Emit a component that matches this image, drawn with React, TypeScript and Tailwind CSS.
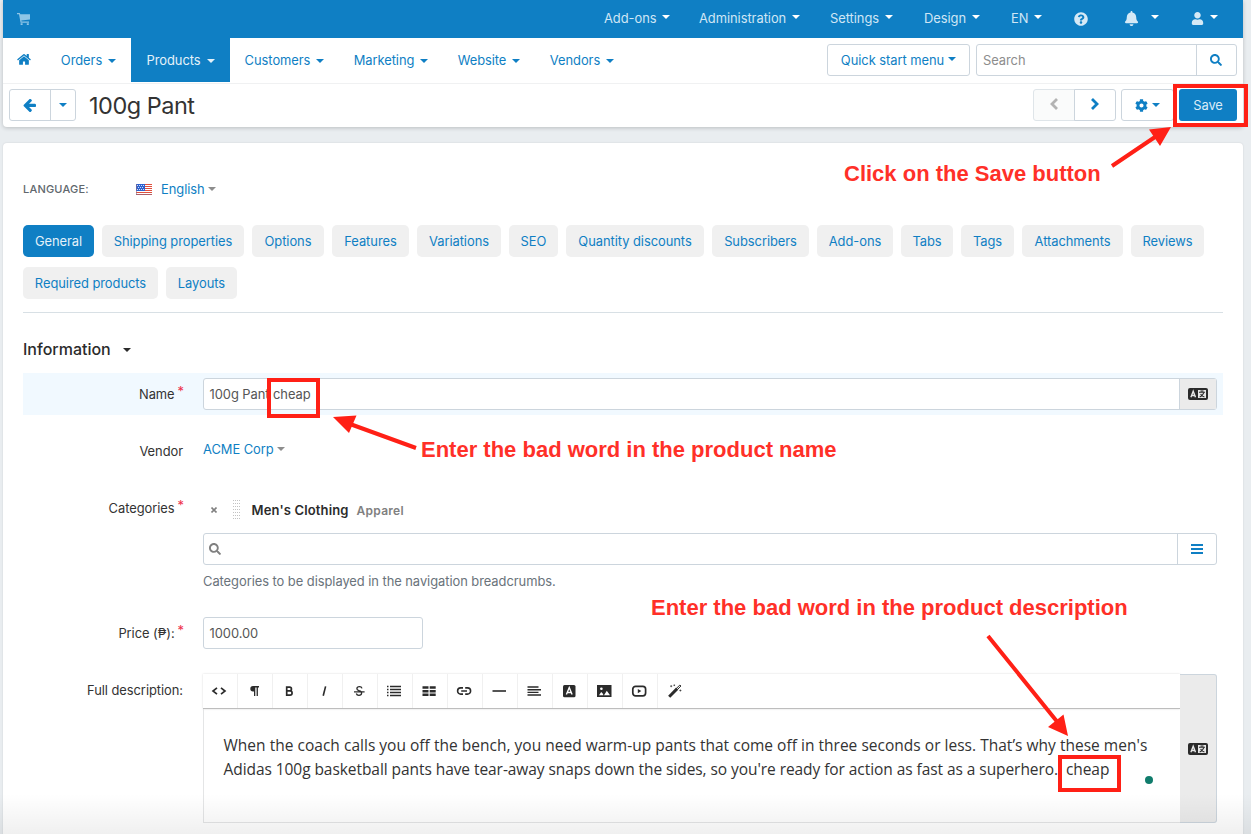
import type { ReactNode } from "react";
import { FaBell, FaCog, FaQuestionCircle, FaSearch, FaUser } from "react-icons/fa";

const Caret = ({ className = "" }: { className?: string }) => (
    <svg className={`shrink-0 ${className}`} width="8" height="4" viewBox="0 0 8 4" fill="currentColor">
        <path d="M0 0h8L4 4z" />
    </svg>
);

const topMenu = [
    { label: "Add-ons", width: "w-[95px]" },
    { label: "Administration", width: "w-[131px]" },
    { label: "Settings", width: "w-[94px]" },
    { label: "Design", width: "w-[87px]" },
    { label: "EN", width: "w-[63px]" },
];

const mainMenu = [
    { label: "Orders", width: "w-[85px]" },
    { label: "Products", width: "w-[99px]", active: true },
    { label: "Customers", width: "w-[109px]" },
    { label: "Marketing", width: "w-[104px]" },
    { label: "Website", width: "w-[92px]" },
    { label: "Vendors", width: "w-[94px]" },
];

const tabs = [
    { label: "General", width: "w-[71px]", active: true },
    { label: "Shipping properties", width: "w-[142px]" },
    { label: "Options", width: "w-[72px]" },
    { label: "Features", width: "w-[77px]" },
    { label: "Variations", width: "w-[84px]" },
    { label: "SEO", width: "w-[49px]" },
    { label: "Quantity discounts", width: "w-[138px]" },
    { label: "Subscribers", width: "w-[97px]" },
    { label: "Add-ons", width: "w-[76px]" },
    { label: "Tabs", width: "w-[52px]" },
    { label: "Tags", width: "w-[53px]" },
    { label: "Attachments", width: "w-[101px]" },
    { label: "Reviews", width: "w-[73px]" },
    { label: "Required products", width: "w-[135px]" },
    { label: "Layouts", width: "w-[71px]" },
];

const CartIcon = () => (
    <svg width="14" height="13" viewBox="0 0 14 13" fill="currentColor">
        <path d="M0 0h2.8l.5 1.2H13v5.2L4.3 7.6l.2.9H12v1.2H3.6L2 1.2H0z" />
        <path d="M3.6 10.2h2V12h-2zM9.8 10.2h2V12h-2z" />
    </svg>
);

const HomeIcon = () => (
    <svg width="14" height="14" viewBox="64 128 1664 1664" fill="currentColor">
        <path d="M1472 992v480q0 26-19 45t-45 19h-384v-384h-256v384h-384q-26 0-45-19t-19-45v-480q0-1 .5-3t.5-3l575-474 575 474q1 2 1 6zm223-69l-62 74q-8 9-21 11h-3q-13 0-21-7l-692-577-692 577q-12 8-24 7-13-2-21-11l-62-74q-8-10-7-23.5t11-21.5l719-599q32-26 76-26t76 26l244 204v-195q0-14 9-23t23-9h192q14 0 23 9t9 23v408l219 182q10 8 11 21.5t-7 23.5z" />
    </svg>
);

const BackIcon = () => (
    <svg width="13" height="13" viewBox="0 -60 1536 1536" fill="currentColor">
        <path d="M1536 640v128q0 53-32.5 90.5t-84.5 37.5h-704l293 294q38 36 38 90t-38 90l-75 76q-37 37-90 37-52 0-91-37l-651-652q-37-37-37-90 0-52 37-91l651-650q38-38 91-38 52 0 90 38l75 74q38 38 38 91t-38 91l-293 293h704q52 0 84.5 37.5t32.5 90.5z" />
    </svg>
);

const Chevron = ({ d }: { d: string }) => (
    <svg width="10" height="14" viewBox="0 0 10 14" className="-mt-0.5 mr-px">
        <path d={d} stroke="currentColor" strokeWidth="2.8" fill="none" />
    </svg>
);

const FlagIcon = () => (
    <svg width="16" height="11" viewBox="0 0 16 11">
        <rect width="16" height="11" fill="#fff" />
        <path d="M0 .5h16M0 2.5h16M0 4.5h16M0 6.5h16M0 8.5h16M0 10.5h16" stroke="#e0503f" />
        <rect width="9" height="7" fill="#2c62d0" />
        <path d="M1 1.5h7M2 3.5h6M1 5.5h7" stroke="#cfdcf7" strokeDasharray="1 1" />
        <path d="M.5 0v11M0 10.5h16" stroke="#8b6a86" strokeOpacity=".6" />
    </svg>
);

const TranslateIcon = () => (
    <svg width="20" height="12" viewBox="0 0 20 12">
        <rect width="20" height="12" rx="2" fill="#2b2b2b" />
        <path d="M2.9 9.2 5.2 3.2l2.3 6M3.7 7.5h3" stroke="#e8e8e8" strokeWidth="1.4" fill="none" />
        <rect x="10" y="2" width="8" height="8" fill="#e8e8e8" />
        <path d="M11 4.2h6M12.5 3h3M15.7 4.8c-.5 1.8-2 3.2-4 4.2M12.6 6c.8 1.4 2 2.4 3.8 3" stroke="#2b2b2b" strokeWidth="1.1" fill="none" />
    </svg>
);

const toolIcons: ReactNode[] = [
    <path d="M6 4.8 2 8l4 3.2M10 4.8 14 8l-4 3.2" stroke="currentColor" strokeWidth="1.7" fill="none" />,
    <path d="M13 3v1.4h-1.1V13h-1.3V4.4H9.3V13H8V8.4H7A2.7 2.7 0 0 1 7 3z" fill="currentColor" />,
    <path d="M5.7 4.2h2.9a1.8 1.8 0 0 1 0 3.7H5.7zM5.7 7.9H9a2 2 0 0 1 0 4.2H5.7z" stroke="currentColor" strokeWidth="1.7" fill="none" />,
    <path d="M9.6 3.4 7.2 12.8" stroke="currentColor" strokeWidth="1.6" fill="none" />,
    <path d="M11 5.4C10.7 4.4 9.7 3.7 8.5 3.7c-1.5 0-2.6.8-2.6 2 0 1.1.8 1.6 2.1 2 1.8.5 2.8 1.2 2.6 2.6-.1 1.3-1.3 2-2.7 2-1.4 0-2.3-.7-2.6-1.8M3 8.8h10.600" stroke="currentColor" strokeWidth="1.3" fill="none" />,
    <path d="M1 3.5h1.5M4 3.5h11M1 6.5h1.5M4 6.5h11M1 9.5h1.5M4 9.5h11M1 12.5h1.5M4 12.5h11" stroke="currentColor" strokeWidth="1.5" fill="none" />,
    <path d="M1.5 3.3h6v2.5h-6zM8.7 3.3h6v2.5h-6zM1.5 6.9h6v2.6h-6zM8.7 6.9h6v2.6h-6zM1.5 10.6h6V13h-6zM8.7 10.6h6V13h-6z" fill="currentColor" />,
    <path d="M7 4.9H4.7a3.1 3.1 0 0 0 0 6.2H7M9.2 4.9h2.3a3.1 3.1 0 0 1 0 6.2H9.2M5.200 8H11" stroke="currentColor" strokeWidth="1.6" fill="none" />,
    <path d="M1.5 8H15" stroke="currentColor" strokeWidth="1.6" />,
    <path d="M1.5 4h11M1.5 6.7H15M1.5 9.4h11M1.5 12H15" stroke="currentColor" strokeWidth="1.4" />,
    <>
        <rect x="2" y="2" width="12.5" height="12.2" rx="1.5" fill="currentColor" />
        <path d="M5.4 11.6 8.25 4.6l2.85 7M6.4 9.5h3.7" stroke="#fff" strokeWidth="1.4" fill="none" />
    </>,
    <>
        <rect x="1" y="2" width="14.5" height="12" fill="currentColor" />
        <path d="M3 12.2 5.2 9l1.5 1.5.8 1.7zM8 12.2l2.8-4.400 3.2 4.400z" fill="#fff" />
        <circle cx="5.4" cy="5.8" r="1.3" fill="#fff" />
    </>,
    <>
        <rect x="1.8" y="3.3" width="12.8" height="9.6" rx="2.8" stroke="currentColor" strokeWidth="1.7" fill="none" />
        <path d="M6.800 5.9v4.3L10.300 8z" fill="currentColor" />
    </>,
    <>
        <path d="M2.2 13.7 10.2 5.6" stroke="currentColor" strokeWidth="3" />
        <path d="M9.6 5.2 12.9 2l1 1-3.2 3.3" stroke="currentColor" strokeWidth="1" fill="none" />
        <path d="M4.2 2.2v2M3.2 3.2h2M7.3 1.5v1.6M6.5 2.3h1.6M13.4 6.5v2M12.4 7.500h2" stroke="currentColor" strokeWidth=".7" />
    </>,
];

const Label = ({ children, required, className = "" }: { children: ReactNode; required?: boolean; className?: string }) => (
    <div className={`flex w-40 shrink-0 justify-end leading-4 text-[#333] ${className}`}>
        {children}
        {required && <span className="ml-[3px] -mt-[3px] -mr-px text-[#ee2e4a]">*</span>}
    </div>
);

const Header = () => (
    <header className="mr-2 ml-[3px] h-[127px] rounded-b bg-white shadow-[0_1px_4px_rgba(0,0,0,0.2)]">
        <div className="flex h-[38px] items-center justify-between bg-[#0f7fc4] pl-[14px] text-[#cfe6f5]">
            <span className="text-[#8fc5e6]"><CartIcon /></span>
            <div className="flex w-[639px] items-center pb-[3px]">
                {topMenu.map((item) => (
                    <div key={item.label} className={`flex shrink-0 items-center gap-1.5 ${item.width}`}>
                        {item.label}
                        <Caret className="-mt-px text-white" />
                    </div>
                ))}
                <FaQuestionCircle className="mt-0.5 mr-9 size-[14px] text-[#d5e9f6]" />
                <FaBell className="mt-px mr-3 size-[15px] text-[#d5e9f6]" />
                <Caret className="mr-8 -mt-px text-white" />
                <FaUser className="mt-px mr-1.5 size-[13px] text-[#d5e9f6]" />
                <Caret className="-mt-px text-white" />
            </div>
        </div>
        <div className="flex h-[46px] border-b border-[#f0f1f2] text-[#0f7fc4]">
            <div className="flex h-11 w-[43px] items-center pl-[14px]"><HomeIcon /></div>
            {mainMenu.map((item) => (
                <div
                    key={item.label}
                    className={`flex h-11 shrink-0 items-center justify-center gap-1.5 ${item.width} ${item.active ? "bg-[#0f7fc4] text-[#e4f1f9]" : ""}`}
                >
                    {item.label}
                    <Caret className="mt-0.5" />
                </div>
            ))}
            <div className="mt-1.5 mr-1.5 ml-auto flex gap-1.5">
                <button className="flex h-8 w-[143px] items-center justify-center gap-1 rounded-[3px] border border-[#ccd5dd]">
                    Quick start menu <Caret className="-mt-0.5" />
                </button>
                <div className="flex h-8 w-[261px] rounded-[3px] border border-[#ccd5dd]">
                    <span className="flex-1 pt-[7px] pl-[6px] leading-4 text-[#8d8d8d]">Search</span>
                    <span className="flex w-10 items-center justify-center border-l border-[#ccd5dd]">
                        <FaSearch className="mr-px size-3" />
                    </span>
                </div>
            </div>
        </div>
        <div className="flex items-center pt-[5px] pr-1.5 pl-1.5 text-[#0f7fc4]">
            <div className="flex h-8 w-[67px] rounded-[3px] border border-[#ccd5dd]">
                <span className="flex w-[41px] items-center justify-center border-r border-[#ccd5dd] pr-px"><BackIcon /></span>
                <span className="flex flex-1 items-center justify-center"><Caret /></span>
            </div>
            <h1 className="ml-[13px] pt-px text-[23.5px] leading-[31px] tracking-[-0.5px] text-[#333]">100g Pant</h1>
            <div className="ml-auto flex">
                <span className="flex h-8 w-[42px] items-center justify-center rounded-l-[3px] border border-[#dfe5e9] bg-[#fafbfb] text-[#b3b3b3]">
                    <Chevron d="M8 2 3 7l5 5" />
                </span>
                <span className="-ml-px flex h-8 w-[42px] items-center justify-center rounded-r-[3px] border border-[#ccd5dd]">
                    <Chevron d="M2 2l5 5-5 5" />
                </span>
                <span className="ml-[5px] flex h-8 w-[53px] items-center justify-center gap-1 rounded-[3px] border border-[#ccd5dd]">
                    <FaCog className="size-[13px]" /> <Caret />
                </span>
                <button className="ml-[5px] h-8 w-[58px] rounded-[3px] bg-[#0f7fc4] text-[#d9ebf7]">Save</button>
            </div>
        </div>
    </header>
);

const Editor = () => (
    <div className="flex h-[149px] w-[1014px]">
        <div className="w-[977px]">
            <div className="flex h-[35px] border-b border-[#bdbdbd] text-[#2b2b2b] shadow-[0_0_2px_rgba(0,0,0,0.15)]">
                {toolIcons.map((icon, i) => (
                    <span key={i} className={`flex w-[35px] items-center justify-center pr-0.5 ${i < toolIcons.length - 1 ? "border-r border-[#f0f0f0]" : ""}`}>
                        <svg width="16" height="16" viewBox="0 0 16 16">{icon}</svg>
                    </span>
                ))}
            </div>
            <div className="h-[114px] border-b border-l border-[#e4e5e6] pt-6 pl-[19.5px] font-['Open_Sans',sans-serif] text-[15.5px] leading-6 whitespace-nowrap text-[#333]">
                <p className="tracking-[0.02px]">When the coach calls you off the bench, you need warm-up pants that come off in three seconds or less. That’s why these men's</p>
                <p className="tracking-[-0.065px]">Adidas 100g basketball pants have tear-away snaps down the sides, so you're ready for action as fast as a superhero. &nbsp;cheap</p>
            </div>
        </div>
        <div className="flex flex-1 items-center justify-center rounded-r-[3px] border border-l-0 border-[#ccd5dd] bg-[#ebebeb]">
            <TranslateIcon />
        </div>
    </div>
);

const Annotations = () => (
    <div className="pointer-events-none absolute inset-0 font-['Liberation_Sans',Arial,sans-serif] text-[22px] leading-[26px] font-bold tracking-normal whitespace-nowrap text-[#ff3028]">
        <div className="absolute top-[84px] left-[1173px] h-[43px] w-[75px] border-4 border-[#ff2016]" />
        <div className="absolute top-[378px] left-[267px] h-[40px] w-[53px] border-4 border-[#ff2016]" />
        <div className="absolute top-[755px] left-[1058px] h-[37px] w-[63px] border-4 border-[#ff2016]" />
        <svg className="absolute inset-0" width="1251" height="834" fill="#ff2016" stroke="#ff2016">
            <path d="M1112 166 1158 135M416 448 350 424M988 636 1059 724" strokeWidth="4" />
            <path d="M1171 127 1149 129.5 1160 146zM333 417 356.5 415.5 349 433zM1068 736 1048 727 1063.5 714.5z" stroke="none" />
        </svg>
        <span className="absolute top-[161px] left-[844px]">Click on the Save button</span>
        <span className="absolute top-[437px] left-[421px]">Enter the bad word in the product name</span>
        <span className="absolute top-[595px] left-[651px]">Enter the bad word in the product description</span>
        <div className="absolute top-[776px] left-[1145px] size-2 rounded-full bg-[#107c6c]" />
    </div>
);

const App = () => {
    return (
        <div className="relative h-[834px] w-[1251px] overflow-hidden bg-[#e9edf0] font-[Inter,sans-serif] text-[12.92px] leading-4 tracking-[-0.05px]">
            <Header />
            <main className="mt-4 mr-2 ml-[3px] h-[700px] rounded-t bg-white px-5 shadow-[0_0_2px_rgba(0,0,0,0.12)]">
                <div className="flex h-[82px] items-center pt-2.5 text-[#0f7fc4]">
                    <span className="w-[113px] text-[11px] font-medium tracking-[0.2px] text-[#60676d]">LANGUAGE:</span>
                    <FlagIcon />
                    <span className="ml-[9px]">English</span>
                    <Caret className="ml-[3px] text-[#8d8d8d]" />
                </div>
                <div className="flex h-[88px] flex-wrap content-start gap-x-2 gap-y-2.5 border-b border-[#d8e0e5]">
                    {tabs.map((tab) => (
                        <button
                            key={tab.label}
                            className={`h-8 rounded-[5px] whitespace-nowrap ${tab.width} ${tab.active ? "bg-[#0f7fc4] text-[#e4f1f9]" : "bg-[#f0f0f0] text-[#0f7fc4]"}`}
                        >
                            {tab.label}
                        </button>
                    ))}
                </div>
                <h2 className="flex h-[60px] items-center gap-3 pt-3 text-base font-medium tracking-normal text-[#2b2b2b]">
                    Information <Caret className="mt-0.5" />
                </h2>
                <div className="flex h-[42px] bg-[#f1f9ff] pt-[5px]">
                    <Label required className="pt-2">Name</Label>
                    <div className="ml-5 flex h-8 w-[1014px] rounded-[3px] border border-[#ccd5dd] bg-white">
                        <span className="flex-1 pt-[7px] pl-[5.5px] text-[#555]">100g Pant cheap</span>
                        <span className="flex w-[37px] items-center justify-center border-l border-[#ccd5dd] bg-[#ebebeb]"><TranslateIcon /></span>
                    </div>
                </div>
                <div className="flex h-[84px] pt-[26px]">
                    <Label className="pt-[2px]">Vendor</Label>
                    <div className="ml-5 flex h-4 items-center gap-[3px] text-[#0f7fc4]">
                        ACME Corp <Caret className="text-[#8d8d8d]" />
                    </div>
                </div>
                <div className="flex h-[118px]">
                    <Label required className="pt-px">Categories</Label>
                    <div className="ml-5 w-[1014px]">
                        <div className="flex h-[34px] items-start pl-2 font-semibold">
                            <svg className="mt-2 shrink-0" width="6" height="6" viewBox="0 0 6 6">
                                <path d="M.5.5l5 5M5.5.5l-5 5" stroke="#808080" strokeWidth="1.6" />
                            </svg>
                            <svg className="mt-px ml-4 shrink-0" width="8" height="20" fill="#c2c2c2">
                                {Array.from({ length: 28 }, (_, i) => (
                                    <rect key={i} x={(i % 4) * 2} y={Math.floor(i / 4) * 3} width="1" height="1" />
                                ))}
                            </svg>
                            <span className="mt-[3px] ml-[10.5px] text-[13px] tracking-[0.15px] text-[#2b2b2b]">Men's Clothing</span>
                            <span className="mt-1 ml-2 text-xs tracking-[0.25px] text-[#808080]">Apparel</span>
                        </div>
                        <div className="flex h-8 items-center rounded-[3px] border border-[#ccd5dd] pl-[5px]">
                            <FaSearch className="size-3 text-[#808080]" />
                            <span className="ml-auto flex h-full w-[39px] items-center justify-center border-l border-[#ccd5dd] text-[#0f7fc4]">
                                <svg width="12" height="10"><path d="M0 1h12M0 5h12M0 9h12" stroke="currentColor" strokeWidth="2" /></svg>
                            </span>
                        </div>
                        <p className="mt-2 text-[#6a737b]">Categories to be displayed in the navigation breadcrumbs.</p>
                    </div>
                </div>
                <div className="flex h-[57px]">
                    <Label required className="pt-2">Price (₱):</Label>
                    <div className="ml-5 h-8 w-[220px] rounded-[3px] border border-[#ccd5dd] pt-[7px] pl-[5.5px] text-[#555]">1000.00</div>
                </div>
                <div className="flex gap-5">
                    <Label className="pt-2">Full description:</Label>
                    <Editor />
                </div>
            </main>
            <div className="absolute inset-x-0 bottom-0 h-10 bg-linear-to-b from-transparent to-black/6" />
            <Annotations />
        </div>
    );
};

export default App;
